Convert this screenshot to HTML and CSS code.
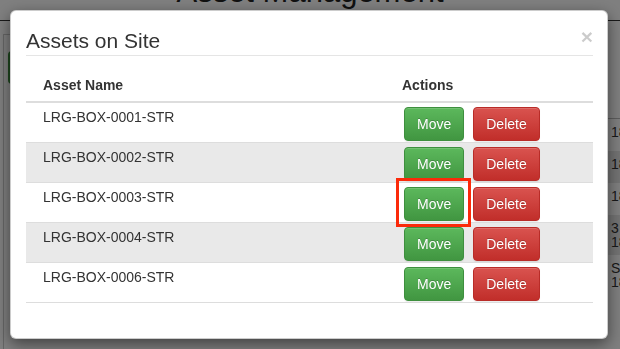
FILE: index.html
```html
<!DOCTYPE html>
<html lang="en">
<head>
    <meta charset="UTF-8">
    <meta name="viewport" content="width=device-width, initial-scale=1.0">
    <title>Asset Management</title>
    <link rel="stylesheet" href="styles.css">
</head>
<body>
    <!-- page underneath the dialog -->
    <div class="page">
        <h1 class="page-title">Asset Management</h1>
        <div class="content">
            <div class="panel">
                <span class="btn-add"></span>
            </div>
            <div class="list">
                <div class="list-head"></div>
                <div class="list-row"><span>18</span></div>
                <div class="list-row stripe"><span>18</span></div>
                <div class="list-row"><span>18</span></div>
                <div class="list-row stripe"><span>3<br>18</span></div>
                <div class="list-row"><span>S<br>18</span></div>
            </div>
        </div>
    </div>

    <div class="backdrop"></div>

    <div class="modal">
        <div class="modal-header">
            <h4 class="modal-title">Assets on Site</h4>
            <span class="close">&times;</span>
        </div>
        <div class="modal-body">
            <table class="assets">
                <thead>
                    <tr>
                        <th class="col-name">Asset Name</th>
                        <th class="col-actions">Actions</th>
                    </tr>
                </thead>
                <tbody>
                    <tr>
                        <td class="col-name">LRG-BOX-0001-STR</td>
                        <td class="col-actions"><div class="actions"><span class="btn btn-move">Move</span><span class="btn btn-delete">Delete</span></div></td>
                    </tr>
                    <tr>
                        <td class="col-name">LRG-BOX-0002-STR</td>
                        <td class="col-actions"><div class="actions"><span class="btn btn-move">Move</span><span class="btn btn-delete">Delete</span></div></td>
                    </tr>
                    <tr>
                        <td class="col-name">LRG-BOX-0003-STR</td>
                        <td class="col-actions"><div class="actions"><span class="btn btn-move marked">Move</span><span class="btn btn-delete">Delete</span></div></td>
                    </tr>
                    <tr>
                        <td class="col-name">LRG-BOX-0004-STR</td>
                        <td class="col-actions"><div class="actions"><span class="btn btn-move">Move</span><span class="btn btn-delete">Delete</span></div></td>
                    </tr>
                    <tr>
                        <td class="col-name">LRG-BOX-0006-STR</td>
                        <td class="col-actions"><div class="actions"><span class="btn btn-move">Move</span><span class="btn btn-delete">Delete</span></div></td>
                    </tr>
                </tbody>
            </table>
        </div>
    </div>
</body>
</html>
```

FILE: styles.css
```css
body {
    font-family: "Liberation Sans", Arial, sans-serif;
    font-size: 14px;
    line-height: 20px;
    color: #333;
    margin: 0;
    padding: 0;
    background-color: #fff;
    width: 620px;
    height: 349px;
    overflow: hidden;
}

/* page behind the dialog */

.page {
    margin-top: -26px;
}

.page-title {
    margin: 0;
    font-size: 31px;
    font-weight: normal;
    line-height: 36px;
    text-align: center;
    color: #222;
    border-bottom: 1px solid #333;
    padding-bottom: 10px;
}

.content {
    display: flex;
    padding: 13px 0 0 3px;
}

.panel {
    flex: 1;
    height: 300px;
    border-left: 1px solid #ccc;
    border-top: 1px solid #ccc;
    padding: 16px 0 0 4px;
}

.btn-add {
    display: block;
    width: 120px;
    height: 33px;
    background-color: #3e8f3e;
    border-radius: 4px;
}

.list {
    flex: 0 0 200px;
    margin-top: 60px;
}

.list-head {
    height: 24px;
    border-bottom: 1px solid #bbb;
}

.list-row {
    display: flex;
    justify-content: flex-end;
    padding: 6px 0;
    min-height: 20px;
    color: #333;
}

.list-row span {
    width: 9px;
    line-height: 14px;
    overflow: hidden;
}

.list-row.stripe {
    background-color: #e6e6e6;
}

.backdrop {
    position: fixed;
    top: 0;
    left: 0;
    right: 0;
    bottom: 0;
    background-color: rgba(0, 0, 0, 0.5);
}

/* dialog */

.modal {
    position: fixed;
    top: 10px;
    left: 10px;
    width: 598px;
    box-sizing: border-box;
    background-color: #fff;
    border: 1px solid rgba(0, 0, 0, 0.2);
    border-radius: 6px;
    box-shadow: 0 5px 15px rgba(0, 0, 0, 0.5);
    padding: 0 14px 0 15px;
}

.modal-header {
    display: flex;
    align-items: flex-start;
    justify-content: space-between;
    padding: 18px 0 3px 0;
    border-bottom: 1px solid #e5e5e5;
}

.modal-title {
    margin: 0;
    font-size: 21px;
    font-weight: normal;
    line-height: 23px;
    color: #333;
}

.close {
    font-size: 21px;
    font-weight: bold;
    line-height: 20px;
    color: #000;
    opacity: 0.2;
    margin-top: -2px;
}

.modal-body {
    padding: 9px 0 15px 0;
}

.assets {
    width: 100%;
    border-collapse: collapse;
    margin-bottom: 20px;
}

.assets th {
    text-align: left;
    font-weight: bold;
    padding: 10px 8px 6px 8px;
    border-bottom: 2px solid #ddd;
}

.assets td {
    padding: 4px 8px 1px 8px;
    border-bottom: 1px solid #ddd;
    vertical-align: top;
}

.assets .col-name {
    width: 343px;
    padding-left: 17px;
}

.assets tbody tr:nth-child(even) {
    background-color: #e9e9e9;
}

.actions {
    display: flex;
    gap: 9px;
    padding-left: 2px;
}

.btn {
    display: inline-block;
    position: relative;
    padding: 6px 12px;
    font-size: 14px;
    line-height: 20px;
    color: #fff;
    border: 1px solid transparent;
    border-radius: 4px;
    text-shadow: 0 -1px 0 rgba(0, 0, 0, 0.2);
    box-shadow: inset 0 1px 0 rgba(255, 255, 255, 0.15), 0 1px 1px rgba(0, 0, 0, 0.075);
}

.btn-move {
    background-image: linear-gradient(to bottom, #5cb85c 0, #419641 100%);
    border-color: #3e8f3e;
}

.btn-delete {
    background-image: linear-gradient(to bottom, #d9534f 0, #c12e2a 100%);
    border-color: #b92c28;
}

/* red box drawn round the button in the screenshot */
.marked::after {
    content: "";
    position: absolute;
    top: -10px;
    left: -9px;
    right: -8px;
    bottom: -7px;
    border: 3px solid #fb2a0a;
}
```
